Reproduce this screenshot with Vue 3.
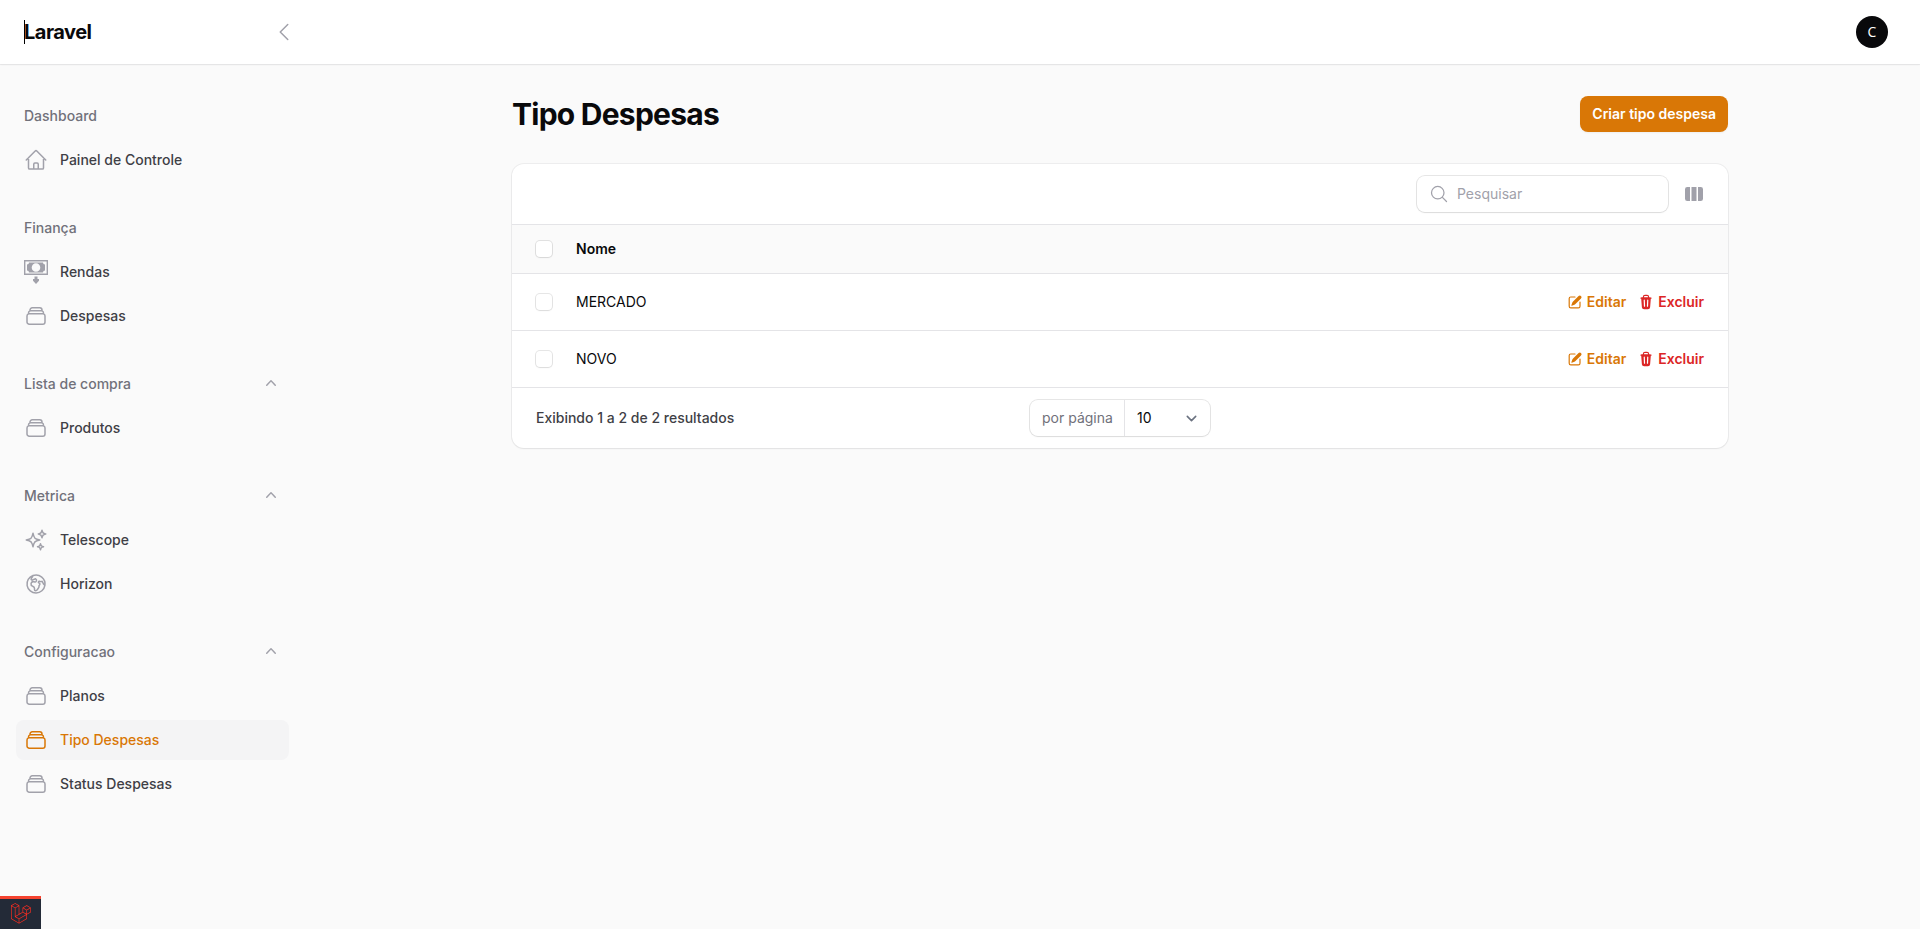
<script setup>
const icons = {
  home: 'm2.25 12 8.954-8.955c.44-.439 1.152-.439 1.591 0L21.75 12M4.5 9.75v10.125c0 .621.504 1.125 1.125 1.125H9.75v-4.875c0-.621.504-1.125 1.125-1.125h2.25c.621 0 1.125.504 1.125 1.125V21h4.125c.621 0 1.125-.504 1.125-1.125V9.75M8.25 21h8.25',
  stack: 'M6 6.878V6a2.25 2.25 0 0 1 2.25-2.25h7.5A2.25 2.25 0 0 1 18 6v.878m-12 0c.235-.083.487-.128.75-.128h10.5c.263 0 .515.045.75.128m-12 0A2.25 2.25 0 0 0 4.5 9v.878m13.5-3A2.25 2.25 0 0 1 19.5 9v.878m0 0a2.246 2.246 0 0 0-.75-.128H5.25c-.263 0-.515.045-.75.128m15 0A2.25 2.25 0 0 1 21 12v6a2.25 2.25 0 0 1-2.25 2.25H5.25A2.25 2.25 0 0 1 3 18v-6c0-.98.626-1.813 1.5-2.122',
  sparkles: 'M9.813 15.904 9 18.75l-.813-2.846a4.5 4.5 0 0 0-3.09-3.09L2.25 12l2.846-.813a4.5 4.5 0 0 0 3.09-3.09L9 5.25l.813 2.846a4.5 4.5 0 0 0 3.09 3.09L15.75 12l-2.846.813a4.5 4.5 0 0 0-3.09 3.09ZM18.259 8.715 18 9.75l-.259-1.035a3.375 3.375 0 0 0-2.455-2.456L14.25 6l1.036-.259a3.375 3.375 0 0 0 2.455-2.456L18 2.25l.259 1.035a3.375 3.375 0 0 0 2.456 2.456L21.75 6l-1.035.259a3.375 3.375 0 0 0-2.456 2.456ZM16.894 20.567 16.5 21.75l-.394-1.183a2.25 2.25 0 0 0-1.423-1.423L13.5 18.75l1.183-.394a2.25 2.25 0 0 0 1.423-1.423l.394-1.183.394 1.183a2.25 2.25 0 0 0 1.423 1.423l1.183.394-1.183.394a2.25 2.25 0 0 0-1.423 1.423Z',
  globe: 'm20.893 13.393-1.135-1.135a2.252 2.252 0 0 1-.421-.585l-1.08-2.16a.414.414 0 0 0-.663-.107.827.827 0 0 1-.812.21l-1.273-.363a.89.89 0 0 0-.738 1.595l.587.39c.59.395.674 1.23.172 1.732l-.2.2c-.212.212-.33.498-.33.796v.41c0 .409-.11.809-.32 1.158l-1.315 2.191a2.11 2.11 0 0 1-1.81 1.025 1.055 1.055 0 0 1-1.055-1.055v-1.172c0-.92-.56-1.747-1.414-2.089l-.655-.261a2.25 2.25 0 0 1-1.383-2.46l.007-.042a2.25 2.25 0 0 1 .29-.787l.09-.15a2.25 2.25 0 0 1 2.37-1.048l1.178.236a1.125 1.125 0 0 0 1.302-.795l.208-.73a1.125 1.125 0 0 0-.578-1.315l-.665-.332-.091.091a2.25 2.25 0 0 1-1.591.659h-.18c-.249 0-.487.1-.662.274a.931.931 0 0 1-1.458-1.137l1.411-2.353a2.25 2.25 0 0 0 .286-.76m11.928 9.869A9 9 0 0 0 8.965 3.525m11.928 9.868A9 9 0 1 1 8.965 3.525',
}

const groups = [
  { label: 'Dashboard', items: [{ label: 'Painel de Controle', icon: 'home' }] },
  { label: 'Finança', items: [{ label: 'Rendas', icon: 'money' }, { label: 'Despesas', icon: 'stack' }] },
  { label: 'Lista de compra', collapsible: true, items: [{ label: 'Produtos', icon: 'stack' }] },
  { label: 'Metrica', collapsible: true, items: [{ label: 'Telescope', icon: 'sparkles' }, { label: 'Horizon', icon: 'globe' }] },
  {
    label: 'Configuracao',
    collapsible: true,
    items: [
      { label: 'Planos', icon: 'stack' },
      { label: 'Tipo Despesas', icon: 'stack', active: true },
      { label: 'Status Despesas', icon: 'stack' },
    ],
  },
]

const rows = ['MERCADO', 'NOVO']
</script>

<template>
  <div class="page">
    <header class="topbar">
      <div class="brand-area">
        <span class="brand">Laravel</span>
        <svg class="collapse outline" viewBox="0 0 24 24"><path d="M15.75 19.5 8.25 12l7.5-7.5" /></svg>
      </div>
      <div class="avatar">C</div>
    </header>

    <div class="body">
      <nav class="sidebar">
        <section v-for="group in groups" :key="group.label" class="group">
          <div class="group-head">
            <span>{{ group.label }}</span>
            <svg v-if="group.collapsible" class="group-chevron" viewBox="0 0 20 20">
              <path fill-rule="evenodd" d="M14.77 12.79a.75.75 0 0 1-1.06-.02L10 8.832 6.29 12.77a.75.75 0 1 1-1.08-1.04l4.25-4.5a.75.75 0 0 1 1.08 0l4.25 4.5a.75.75 0 0 1-.02 1.06Z" />
            </svg>
          </div>
          <a v-for="item in group.items" :key="item.label" class="item" :class="{ active: item.active }">
            <svg v-if="item.icon === 'money'" class="item-icon" viewBox="0 0 24 24">
              <path fill-rule="evenodd" d="M0 0h24v15H0ZM1.400 1.400v12.200h21.200V1.400Z" />
              <path fill-rule="evenodd" d="M5 2.500h14a2 2 0 0 0 2 2v6a2 2 0 0 0-2 2H5a2 2 0 0 0-2-2v-6a2 2 0 0 0 2-2ZM12 3.200a4.300 4.300 0 1 0 0 8.600 4.300 4.300 0 0 0 0-8.600Z" />
              <path d="M10.500 16.500h3V19H15v1.800L12 24l-3-3.200V19h1.500Z" />
            </svg>
            <svg v-else class="item-icon outline" viewBox="0 0 24 24"><path :d="icons[item.icon]" /></svg>
            <span>{{ item.label }}</span>
          </a>
        </section>
      </nav>

      <main class="main">
        <div class="heading">
          <h1>Tipo Despesas</h1>
          <button class="create">Criar tipo despesa</button>
        </div>

        <section class="card">
          <div class="toolbar">
            <div class="search">
              <svg class="outline" viewBox="0 0 24 24"><path d="m21 21-5.197-5.197m0 0A7.5 7.5 0 1 0 5.196 5.196a7.5 7.5 0 0 0 10.607 10.607Z" /></svg>
              <span>Pesquisar</span>
            </div>
            <svg class="columns" viewBox="0 0 20 20">
              <path d="M14 17h2.750A2.250 2.250 0 0 0 19 14.750v-9.500A2.250 2.250 0 0 0 16.750 3H14v14ZM12.500 3h-5v14h5V3ZM3.250 3H6v14H3.250A2.250 2.250 0 0 1 1 14.750v-9.500A2.250 2.250 0 0 1 3.250 3Z" />
            </svg>
          </div>

          <div class="row row-head">
            <span class="checkbox"></span>
            <span class="name">Nome</span>
          </div>

          <div v-for="name in rows" :key="name" class="row">
            <span class="checkbox"></span>
            <span class="name">{{ name }}</span>
            <div class="actions">
              <a class="action edit">
                <svg viewBox="0 0 20 20">
                  <path d="m5.433 13.917 1.262-3.155A4 4 0 0 1 7.580 9.420l6.920-6.918a2.121 2.121 0 0 1 3 3l-6.920 6.918c-.383.383-.840.685-1.343.886l-3.154 1.262a.5.5 0 0 1-.650-.650Z" />
                  <path d="M3.500 5.750c0-.690.560-1.250 1.250-1.250H10A.75.75 0 0 0 10 3H4.750A2.750 2.750 0 0 0 2 5.750v9.500A2.750 2.750 0 0 0 4.750 18h9.500A2.750 2.750 0 0 0 17 15.250V10a.75.75 0 0 0-1.500 0v5.250c0 .690-.560 1.250-1.250 1.250h-9.500c-.690 0-1.250-.560-1.250-1.250v-9.500Z" />
                </svg>
                <span>Editar</span>
              </a>
              <a class="action delete">
                <svg viewBox="0 0 20 20">
                  <path fill-rule="evenodd" d="M8.75 1A2.75 2.75 0 0 0 6 3.750v.443c-.795.077-1.584.176-2.365.298a.75.75 0 1 0 .230 1.482l.149-.022.841 10.518A2.750 2.750 0 0 0 7.596 19h4.807a2.750 2.750 0 0 0 2.742-2.530l.841-10.520.149.023a.75.75 0 0 0 .230-1.482A41.030 41.030 0 0 0 14 4.193V3.750A2.750 2.750 0 0 0 11.250 1h-2.500ZM10 4c.840 0 1.673.025 2.500.075V3.750c0-.690-.560-1.250-1.250-1.250h-2.500c-.690 0-1.250.560-1.250 1.250v.325C8.327 4.025 9.160 4 10 4ZM8.580 7.720a.75.75 0 0 0-1.500.060l.300 7.500a.75.75 0 1 0 1.500-.060l-.300-7.500Zm4.340.060a.75.75 0 1 0-1.500-.060l-.300 7.500a.75.75 0 1 0 1.500.060l.300-7.500Z" />
                </svg>
                <span>Excluir</span>
              </a>
            </div>
          </div>

          <footer class="footer">
            <span class="summary">Exibindo 1 a 2 de 2 resultados</span>
            <div class="per-page">
              <span class="prefix">por página</span>
              <span class="value">
                10
                <svg viewBox="0 0 20 20"><path d="m6 8 4 4 4-4" /></svg>
              </span>
            </div>
          </footer>
        </section>
      </main>
    </div>

    <div class="debugbar">
      <svg viewBox="0 0 50 52">
        <path d="M49.626 11.564a.809.809 0 0 1 .028.209v10.972a.8.8 0 0 1-.402.694l-9.209 5.302V39.25c0 .286-.152.55-.4.694L20.42 51.01c-.044.025-.092.041-.14.058-.018.006-.035.017-.054.022a.805.805 0 0 1-.41 0c-.022-.006-.042-.018-.063-.026-.044-.016-.09-.03-.132-.054L.402 39.944A.801.801 0 0 1 0 39.25V6.334c0-.072.01-.142.028-.21.006-.023.02-.044.028-.067.015-.042.029-.085.051-.124.015-.026.037-.047.055-.071.023-.032.044-.065.071-.093.023-.023.053-.04.079-.06.029-.024.055-.05.088-.069h.001l9.61-5.533a.802.802 0 0 1 .8 0l9.61 5.533h.002c.032.02.059.045.088.068.026.02.055.038.078.06.028.029.048.062.072.094.017.024.04.045.054.071.023.04.036.082.052.124.008.023.022.044.028.068a.809.809 0 0 1 .028.209v20.559l8.008-4.611v-10.51c0-.07.01-.141.028-.208.007-.024.02-.045.028-.068.016-.042.03-.085.052-.124.015-.026.037-.047.054-.071.024-.032.044-.065.072-.093.023-.023.052-.04.078-.06.03-.024.056-.05.088-.069h.001l9.611-5.533a.801.801 0 0 1 .8 0l9.61 5.533c.034.02.06.045.09.068.025.02.054.038.077.06.028.029.048.062.072.094.018.024.04.045.054.071.023.039.036.082.052.124.009.023.022.044.028.068zm-1.574 10.718v-9.124l-3.363 1.936-4.646 2.675v9.124l8.01-4.611zm-9.61 16.505v-9.13l-4.57 2.61-13.05 7.448v9.216l17.62-10.144zM1.602 7.719v31.068L19.22 48.93v-9.214l-9.204-5.209-.003-.002-.004-.002c-.031-.018-.057-.044-.086-.066-.025-.02-.054-.036-.076-.058l-.002-.003c-.026-.025-.044-.056-.066-.084-.02-.027-.044-.05-.06-.078l-.001-.003c-.018-.03-.029-.066-.042-.1-.013-.03-.03-.058-.038-.09v-.001c-.01-.038-.012-.078-.016-.117-.004-.03-.012-.06-.012-.09v-.002-21.481L4.965 9.654 1.602 7.72zm8.81-5.994L2.405 6.334l8.005 4.609 8.006-4.61-8.006-4.608zm4.164 28.764l4.645-2.674V7.719l-3.363 1.936-4.646 2.675v20.096l3.364-1.937zM39.243 7.164l-8.006 4.609 8.006 4.609 8.005-4.61-8.005-4.608zm-.801 10.605l-4.646-2.675-3.363-1.936v9.124l4.645 2.674 3.364 1.937v-9.124zM20.02 38.33l11.743-6.704 5.87-3.35-8-4.606-9.211 5.303-8.395 4.833 7.993 4.524z" />
      </svg>
    </div>
  </div>
</template>

<style>
body {
  background: #fafafa;
}
</style>

<style scoped>
.page {
  height: 100vh;
  display: flex;
  flex-direction: column;
  overflow: hidden;
  background: #fafafa;
  color: #09090b;
  font: 400 14px/20px Inter, sans-serif;
}
.page *,
.page {
  box-sizing: border-box;
}
svg {
  display: block;
  flex: none;
  fill: currentColor;
}
svg.outline {
  fill: none;
  stroke: currentColor;
  stroke-width: 1.5;
  stroke-linecap: round;
  stroke-linejoin: round;
}

/* Top bar */
.topbar {
  height: 64px;
  flex: none;
  display: flex;
  align-items: center;
  justify-content: space-between;
  padding-right: 32px;
  background: #fff;
  box-shadow: 0 0 0 1px rgba(9, 9, 11, 0.05), 0 1px 2px rgba(0, 0, 0, 0.05);
}
.brand-area {
  width: 320px;
  padding: 0 24px;
  display: flex;
  align-items: center;
  justify-content: space-between;
}
.brand {
  height: 24px;
  border-left: 1px solid #000;
  font-size: 20px;
  font-weight: 700;
  line-height: 24px;
  letter-spacing: -0.5px;
  text-indent: -1px;
}
.collapse {
  width: 24px;
  height: 24px;
  color: #a1a1aa;
}
.avatar {
  width: 32px;
  height: 32px;
  border-radius: 50%;
  background: #09090b;
  color: #fff;
  font: 400 14px/32px "Open Sans", sans-serif;
  text-align: center;
}

/* Sidebar */
.body {
  flex: 1;
  display: flex;
}
.sidebar {
  width: 320px;
  flex: none;
  padding: 32px 31px 32px 16px;
  display: flex;
  flex-direction: column;
  gap: 28px;
}
.group {
  display: flex;
  flex-direction: column;
  gap: 4px;
}
.group-head {
  height: 40px;
  padding: 0 8px;
  display: flex;
  align-items: center;
  justify-content: space-between;
  color: #71717a;
  font-weight: 500;
}
.group-chevron {
  width: 20px;
  height: 20px;
  margin-bottom: 2px;
  color: #a1a1aa;
}
.item {
  height: 40px;
  padding: 0 8px;
  display: flex;
  align-items: center;
  gap: 12px;
  border-radius: 8px;
  color: #3f3f46;
  font-weight: 500;
}
.item-icon {
  width: 24px;
  height: 24px;
  color: #a1a1aa;
}
.item.active {
  background: #f4f4f5;
}
.item.active,
.item.active .item-icon {
  color: #d97706;
}

/* Content */
.main {
  width: 1280px;
  margin: 0 auto;
  padding: 32px;
}
.heading {
  display: flex;
  align-items: center;
  justify-content: space-between;
  margin-bottom: 32px;
}
h1 {
  margin: 0;
  font-size: 30px;
  font-weight: 700;
  line-height: 36px;
  letter-spacing: -0.75px;
}
.create {
  height: 36px;
  padding: 0 12px;
  border: 0;
  border-radius: 8px;
  background: #d97706;
  color: #fff;
  font: 600 14px/20px Inter, sans-serif;
  box-shadow: 0 1px 2px rgba(0, 0, 0, 0.05);
}
.card {
  border-radius: 12px;
  background: #fff;
  box-shadow: 0 0 0 1px rgba(9, 9, 11, 0.05), 0 1px 2px rgba(0, 0, 0, 0.05);
}
.toolbar {
  height: 60px;
  padding: 0 24px;
  display: flex;
  align-items: center;
  justify-content: flex-end;
  gap: 16px;
}
.search {
  width: 251px;
  height: 36px;
  padding: 0 12px;
  display: flex;
  align-items: center;
  gap: 8px;
  border-radius: 8px;
  color: #a1a1aa;
  box-shadow: 0 0 0 1px rgba(9, 9, 11, 0.1), 0 1px 2px rgba(0, 0, 0, 0.05);
}
.search svg,
.columns {
  width: 20px;
  height: 20px;
  color: #a1a1aa;
}
.row {
  height: 57px;
  padding: 0 24px;
  display: flex;
  align-items: center;
  border-top: 1px solid #e4e4e7;
}
.row-head {
  height: 49px;
  background: #fafafa;
  font-weight: 600;
}
.checkbox {
  width: 16px;
  height: 16px;
  margin-right: 24px;
  border-radius: 4px;
  background: #fff;
  box-shadow: 0 0 0 1px rgba(9, 9, 11, 0.1), 0 1px 2px rgba(0, 0, 0, 0.05);
}
.actions {
  margin-left: auto;
  display: flex;
  gap: 12px;
}
.action {
  display: flex;
  align-items: center;
  gap: 4px;
  font-weight: 600;
}
.action svg {
  width: 16px;
  height: 16px;
}
.edit {
  color: #d97706;
}
.delete {
  color: #dc2626;
}
.footer {
  height: 61px;
  padding: 0 24px;
  display: grid;
  grid-template-columns: 1fr auto 1fr;
  align-items: center;
  border-top: 1px solid #e4e4e7;
}
.summary {
  color: #3f3f46;
  font-weight: 500;
}
.per-page {
  width: 180px;
  height: 36px;
  display: flex;
  border-radius: 8px;
  line-height: 36px;
  box-shadow: 0 0 0 1px rgba(9, 9, 11, 0.1), 0 1px 2px rgba(0, 0, 0, 0.05);
}
.prefix {
  width: 95px;
  padding-left: 12px;
  border-right: 1px solid #e4e4e7;
  color: #71717a;
  white-space: nowrap;
}
.value {
  flex: 1;
  padding: 0 8px 0 12px;
  display: flex;
  align-items: center;
  justify-content: space-between;
}
.value svg {
  width: 21px;
  height: 21px;
  fill: none;
  stroke: #6b7280;
  stroke-width: 1.5;
  stroke-linecap: round;
  stroke-linejoin: round;
}

/* Minimised debug bar */
.debugbar {
  position: fixed;
  left: 0;
  bottom: 0;
  width: 41px;
  height: 33px;
  padding: 4px 0 0 11px;
  border-top: 3px solid #f4432f;
  background: #232a37;
  color: #ff2d20;
}
.debugbar svg {
  width: 20px;
  height: 21px;
}
</style>
